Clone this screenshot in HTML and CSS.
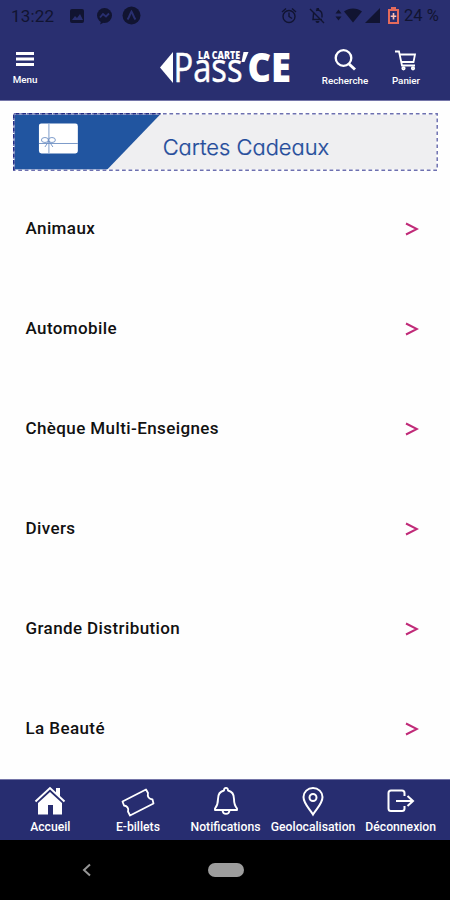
FILE: index.html
```html
<!DOCTYPE html>
<html lang="fr">
<head>
<meta charset="utf-8">
<title>Cartes Cadeaux</title>
<link rel="stylesheet" href="styles.css">
</head>
<body>
<div class="status">
  <span class="clock">13:22</span>
  <svg class="status-left" width="74" height="20" viewBox="0 0 74 20">
    <rect x="1" y="3" width="14" height="14" rx="2" fill="#111431"/>
    <path d="M3 14l3-4 2 2 3-4 3 6z" fill="#292f70"/>
    <circle cx="35.500" cy="9.500" r="7.500" fill="#111431"/><path d="M32 15.500l-1 3 4-2z" fill="#111431"/>
    <path d="M31 11.500l3-3.500 3 2.500 3-3" fill="none" stroke="#292f70" stroke-width="1.800"/>
    <circle cx="62.500" cy="9.500" r="9" fill="#111431"/>
    <path d="M58.500 13.500c2-2 2.500-6 4-8 1.500 2 2 6 4 8" fill="none" stroke="#292f70" stroke-width="2"/>
  </svg>
  <svg class="status-right" width="121" height="20" viewBox="280 6 121 20">
    <g fill="none" stroke="#111431" stroke-width="1.400">
      <circle cx="289" cy="16.500" r="6"/><path d="M289 12.500v4l3 2M282 12l4-3.500M296 12l-4-3.500"/>
      <path d="M314 12c-1 2-.5 5-1 7.500h9M316 10.500c3-1.500 6 1 6 4v3M310 9l14 14"/>
    </g>
    <g fill="#111431">
      <path d="M315.500 21h4a2 2 0 0 1-4 0zM316.500 8h2.500v3h-2.500z"/>
      <path d="M335.500 13.500l3-4 3 4zM335.500 16.500l3 4 3-4z"/>
      <path d="M344 11.500c5-4 13-4 18 0l-9 11z"/><path d="M380 8v15h-15z"/>
    </g>
    <path d="M391 7h5v2h3v15h-11V9h3z" fill="#e56b5c"/>
    <rect x="390" y="11" width="7" height="11" fill="#292f70"/>
    <path d="M392.700 13h1.600v2.500h2v1.600h-2v2.500h-1.600v-2.500h-2v-1.600h2z" fill="#ffc0b3"/>
  </svg>
  <span class="percent">24 %</span>
</div>

<header class="header">
  <a class="action menu">
    <svg width="18" height="16" viewBox="0 0 18 16" fill="#fff"><path d="M0 1h18v3H0zM0 6.500h18v3H0zM0 12h18v3H0z"/></svg>
    <span>Menu</span>
  </a>
  <svg class="logo" width="132" height="38" viewBox="159 48 132 38" fill="#fff">
    <path d="M160 67.500l13-15.500v31z"/>
    <text class="logo-pass" x="173.500" y="82" textLength="69" lengthAdjust="spacingAndGlyphs">Pass</text>
    <text class="logo-small" x="198" y="58.800" textLength="42" lengthAdjust="spacingAndGlyphs">LA CARTE</text>
    <path d="M243.500 52h5l-4 10h-3z"/>
    <text class="logo-ce" x="247.500" y="82" textLength="43.500" lengthAdjust="spacingAndGlyphs">CE</text>
  </svg>
  <a class="action search">
    <svg width="24" height="22" viewBox="0 0 24 22" fill="none" stroke="#fff" stroke-width="2.300"><circle cx="10.500" cy="9" r="7.800"/><path d="M16 15l6 5.500" stroke-width="3"/></svg>
    <span>Recherche</span>
  </a>
  <a class="action cart">
    <svg width="22" height="21" viewBox="0 0 22 21" fill="none" stroke="#fff" stroke-width="1.800"><path d="M0 1.500h4l3 14h13M4.500 4.500H20l-1.500 7.500H6.500"/><circle cx="8.500" cy="18.300" r="1.200"/><circle cx="18" cy="18.300" r="1.200"/></svg>
    <span>Panier</span>
  </a>
</header>

<main class="content">
  <svg class="banner" width="426" height="58" viewBox="0 0 426 58">
    <path d="M1 1h424v56H1z" fill="#efeff1"/>
    <path d="M1 1h147L94 57H1z" fill="#2155a0"/>
    <rect x="26" y="10.500" width="39" height="30" rx="2.500" fill="#fff"/>
    <g fill="none" stroke="#6e8fc4" stroke-width=".9"><path d="M36 11v29M26 30.500h39"/><ellipse cx="32" cy="27" rx="3.500" ry="2.500"/><ellipse cx="39" cy="27" rx="3.500" ry="2.500"/><path d="M36 28l-4 6M36 28l4 6"/></g>
    <rect x=".8" y=".8" width="424.400" height="56.400" fill="none" stroke="#fff" stroke-width="1.500"/>
    <rect x=".8" y=".8" width="424.400" height="56.400" fill="none" stroke="#6d70b0" stroke-width="1.500" stroke-dasharray="3.700 2.800"/>
    <path d="M.8 57.200V.8H148" fill="none" stroke="#202a83" stroke-width="1.500" stroke-dasharray="3.700 2.800"/>
    <text class="banner-title" x="150" y="42" textLength="167" lengthAdjust="spacingAndGlyphs">Cartes Cadeaux</text>
  </svg>
  <ul class="list">
    <li><span>Animaux</span><svg class="chevron" viewBox="0 0 14 14"><path d="M1 1.500l11 5.500-11 5.500"/></svg></li>
    <li><span>Automobile</span><svg class="chevron" viewBox="0 0 14 14"><path d="M1 1.500l11 5.500-11 5.500"/></svg></li>
    <li><span>Chèque Multi-Enseignes</span><svg class="chevron" viewBox="0 0 14 14"><path d="M1 1.500l11 5.500-11 5.500"/></svg></li>
    <li><span>Divers</span><svg class="chevron" viewBox="0 0 14 14"><path d="M1 1.500l11 5.500-11 5.500"/></svg></li>
    <li><span>Grande Distribution</span><svg class="chevron" viewBox="0 0 14 14"><path d="M1 1.500l11 5.500-11 5.500"/></svg></li>
    <li><span>La Beauté</span><svg class="chevron" viewBox="0 0 14 14"><path d="M1 1.500l11 5.500-11 5.500"/></svg></li>
  </ul>
</main>

<nav class="tabs">
  <a><svg viewBox="0 0 34 32"><path d="M5 18L17 7l12 11v11.500h-9V20h-5v9.500H5z" fill="#fff"/><path d="M2.500 16.500L17 3l14.500 13.500" fill="none" stroke="#fff" stroke-width="2"/><path d="M23 3h4v9l-4-4z" fill="#fff"/></svg><span>Accueil</span></a>
  <a><svg viewBox="0 0 34 32" fill="none" stroke="#fff" stroke-width="1.800" stroke-linejoin="round"><path d="M1.500 16.500L25 4.500l2 3.500c-1 4 1 6 4.500 6.500l1 4L9 30.500l-2-4c1-3.500-1-5.500-4-6z"/></svg><span>E-billets</span></a>
  <a><svg viewBox="0 0 34 32" fill="none" stroke="#fff" stroke-width="1.900" stroke-linejoin="round"><path d="M15 5.500c0-3.500 4-3.500 4 0 4.500 1 6 4.500 6 8.500 0 5 1 7 3 9.500v1.500H6v-1.500C8 21 9 19 9 14c0-4 1.500-7.500 6-8.500z"/><path d="M13.500 25.500c.5 4.500 6.500 4.500 7 0"/></svg><span>Notifications</span></a>
  <a><svg viewBox="0 0 34 32" fill="none" stroke="#fff" stroke-width="2"><path d="M17 29.500c-4-6.500-9.500-11-9.500-17.500a9.500 9 0 0 1 19 0c0 6.500-5.500 11-9.500 17.500z"/><circle cx="17" cy="12.500" r="3.500"/></svg><span>Geolocalisation</span></a>
  <a><svg viewBox="0 0 34 32" fill="none" stroke="#fff" stroke-width="2"><path d="M20.500 11V8c0-1.500-1-2.500-2.500-2.500H7C5.500 5.500 4.500 6.500 4.500 8v15.500c0 1.500 1 2.500 2.500 2.500h11c1.500 0 2.500-1 2.500-2.500V21M12 16h16M23.500 11l5.500 5-5.500 5"/></svg><span>Déconnexion</span></a>
</nav>
<div class="system">
  <svg width="10" height="14" viewBox="0 0 10 14"><path d="M8 1.500L2 7l6 5.500" fill="none" stroke="#969696" stroke-width="2"/></svg>
  <span class="home"></span>
</div>
</body>
</html>
```
FILE: styles.css
```css
* { box-sizing: border-box; }
body {
  margin: 0;
  width: 450px;
  height: 900px;
  display: flex;
  flex-direction: column;
  overflow: hidden;
  background: #fefefe;
  font-family: Roboto, sans-serif;
}
.status {
  height: 34px;
  display: flex;
  align-items: flex-start;
  padding: 6px 9px 0 11px;
  background: #292f70;
  color: #111431;
  font-size: 17px;
  line-height: 20px;
}
.clock { width: 58px; letter-spacing: .2px; }
.status-right { margin-left: auto; }
.percent { width: 37px; margin-left: 3px; font-size: 16.500px; white-space: nowrap; }
.header {
  height: 67px;
  display: grid;
  grid-template-columns: 50px 109px 132px 22px 64px 58px;
  background: #292f70;
  border-bottom: 1px solid #7475a8;
  color: #fff;
}
.action {
  display: flex;
  flex-direction: column;
  align-items: center;
  font-size: 9.800px;
  font-weight: 500;
  line-height: 12px;
}
.menu { padding-top: 17px; }
.menu span { margin-top: 7px; }
.logo { grid-column: 3; margin-top: 14px; overflow: visible; }
.search { grid-column: 5; padding-top: 15px; }
.search span, .cart span { margin-top: 4px; }
.cart { grid-column: 6; padding-top: 16px; }
.logo-pass { font: 400 41px "Open Sans", sans-serif; stroke: #fff; stroke-width: .5px; }
.logo-small { font: 800 10px "Open Sans", sans-serif; }
.logo-ce { font: 800 41px "Open Sans", sans-serif; }
.content { height: 678px; padding: 12px 12px 0 13px; }
.banner { display: block; width: 425px; }
.banner-title {
  font: 300 22px Inter, sans-serif;
  font-feature-settings: "cv11";
  fill: #244c9b;
  stroke: #244c9b;
  stroke-width: .25px;
}
.list { list-style: none; margin: 7px 0 0; padding: 0 19px 0 12.500px; }
.list li {
  height: 100px;
  display: flex;
  align-items: center;
  justify-content: space-between;
  color: #111;
  font-size: 17px;
  font-weight: 500;
  letter-spacing: .4px;
}
.chevron {
  width: 14px;
  height: 14px;
  margin-top: 2px;
  fill: none;
  stroke: #c02a78;
  stroke-width: 2;
}
.tabs {
  height: 61px;
  display: grid;
  grid-template-columns: repeat(5, 87.600px);
  justify-content: center;
  padding-left: 1px;
  border-top: 1px solid #7475a8;
  background: #272d70;
  color: #fff;
}
.tabs a {
  display: flex;
  flex-direction: column;
  align-items: center;
  padding-top: 5px;
  font-size: 12.200px;
  font-weight: 500;
  line-height: 16px;
  white-space: nowrap;
}
.tabs svg { width: 34px; height: 32px; margin-bottom: 2px; }
.system {
  flex: 1;
  display: flex;
  align-items: center;
  padding-left: 82px;
  background: #000;
}
.home { width: 36px; height: 14px; margin-left: 116px; border-radius: 7px; background: #9d9d9d; }
```
